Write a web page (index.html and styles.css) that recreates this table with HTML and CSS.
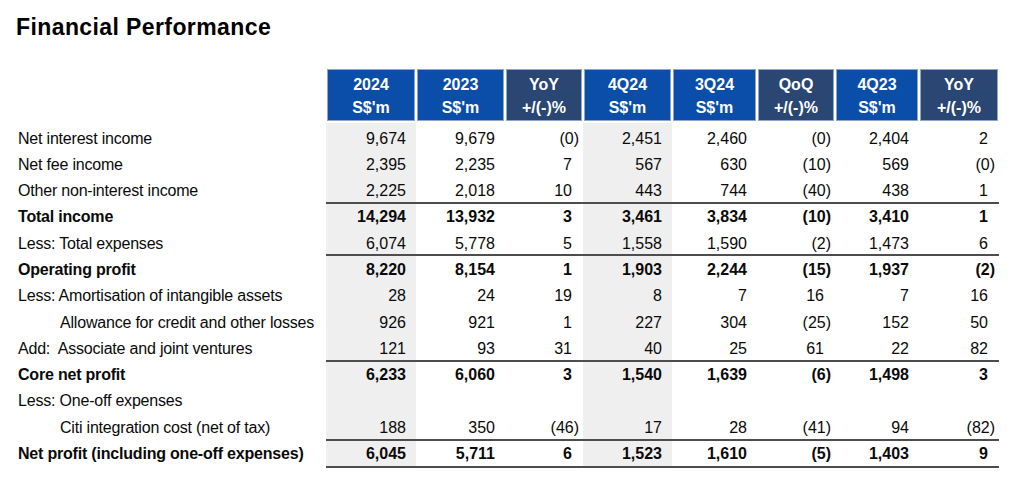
FILE: index.html
```html
<!DOCTYPE html>
<html lang="en">
<head>
<meta charset="utf-8">
<title>Financial Performance</title>
<link rel="stylesheet" href="styles.css">
</head>
<body>
<h1 class="title">Financial Performance</h1>
<table class="fin">
  <colgroup>
    <col class="c-label">
    <col class="c-w90 shade">
    <col class="c-w89">
    <col class="c-w78">
    <col class="c-w89 shade">
    <col class="c-w85">
    <col class="c-w78">
    <col class="c-w84">
    <col class="c-w80">
  </colgroup>
  <thead>
    <tr>
      <th class="blank"></th>
      <th class="hb">2024<br>S$'m</th>
      <th class="hb">2023<br>S$'m</th>
      <th class="hn">YoY<br>+/(-)%</th>
      <th class="hb">4Q24<br>S$'m</th>
      <th class="hb">3Q24<br>S$'m</th>
      <th class="hn">QoQ<br>+/(-)%</th>
      <th class="hb">4Q23<br>S$'m</th>
      <th class="hn">YoY<br>+/(-)%</th>
    </tr>
  </thead>
  <tbody>
    <tr>
      <td class="lbl">Net interest income</td>
      <td class="amt">9,674</td><td class="amt">9,679</td><td class="pct neg">(0)</td>
      <td class="amt">2,451</td><td class="amt">2,460</td><td class="pct neg">(0)</td>
      <td class="amt">2,404</td><td class="pct">2</td>
    </tr>
    <tr>
      <td class="lbl">Net fee income</td>
      <td class="amt">2,395</td><td class="amt">2,235</td><td class="pct">7</td>
      <td class="amt">567</td><td class="amt">630</td><td class="pct neg">(10)</td>
      <td class="amt">569</td><td class="pct neg">(0)</td>
    </tr>
    <tr>
      <td class="lbl">Other non-interest income</td>
      <td class="amt">2,225</td><td class="amt">2,018</td><td class="pct">10</td>
      <td class="amt">443</td><td class="amt">744</td><td class="pct neg">(40)</td>
      <td class="amt">438</td><td class="pct">1</td>
    </tr>
    <tr class="total">
      <td class="lbl">Total income</td>
      <td class="amt">14,294</td><td class="amt">13,932</td><td class="pct">3</td>
      <td class="amt">3,461</td><td class="amt">3,834</td><td class="pct neg">(10)</td>
      <td class="amt">3,410</td><td class="pct">1</td>
    </tr>
    <tr>
      <td class="lbl">Less: Total expenses</td>
      <td class="amt">6,074</td><td class="amt">5,778</td><td class="pct">5</td>
      <td class="amt">1,558</td><td class="amt">1,590</td><td class="pct neg">(2)</td>
      <td class="amt">1,473</td><td class="pct">6</td>
    </tr>
    <tr class="total">
      <td class="lbl">Operating profit</td>
      <td class="amt">8,220</td><td class="amt">8,154</td><td class="pct">1</td>
      <td class="amt">1,903</td><td class="amt">2,244</td><td class="pct neg">(15)</td>
      <td class="amt">1,937</td><td class="pct neg">(2)</td>
    </tr>
    <tr>
      <td class="lbl">Less: Amortisation of intangible assets</td>
      <td class="amt">28</td><td class="amt">24</td><td class="pct">19</td>
      <td class="amt">8</td><td class="amt">7</td><td class="pct">16</td>
      <td class="amt">7</td><td class="pct">16</td>
    </tr>
    <tr>
      <td class="lbl indent">Allowance for credit and other losses</td>
      <td class="amt">926</td><td class="amt">921</td><td class="pct">1</td>
      <td class="amt">227</td><td class="amt">304</td><td class="pct neg">(25)</td>
      <td class="amt">152</td><td class="pct">50</td>
    </tr>
    <tr>
      <td class="lbl">Add:&nbsp; Associate and joint ventures</td>
      <td class="amt">121</td><td class="amt">93</td><td class="pct">31</td>
      <td class="amt">40</td><td class="amt">25</td><td class="pct">61</td>
      <td class="amt">22</td><td class="pct">82</td>
    </tr>
    <tr class="total">
      <td class="lbl">Core net profit</td>
      <td class="amt">6,233</td><td class="amt">6,060</td><td class="pct">3</td>
      <td class="amt">1,540</td><td class="amt">1,639</td><td class="pct neg">(6)</td>
      <td class="amt">1,498</td><td class="pct">3</td>
    </tr>
    <tr>
      <td class="lbl">Less: One-off expenses</td>
      <td class="amt"></td><td class="amt"></td><td class="pct"></td>
      <td class="amt"></td><td class="amt"></td><td class="pct"></td>
      <td class="amt"></td><td class="pct"></td>
    </tr>
    <tr>
      <td class="lbl indent">Citi integration cost (net of tax)</td>
      <td class="amt">188</td><td class="amt">350</td><td class="pct neg">(46)</td>
      <td class="amt">17</td><td class="amt">28</td><td class="pct neg">(41)</td>
      <td class="amt">94</td><td class="pct neg">(82)</td>
    </tr>
    <tr class="total last">
      <td class="lbl">Net profit (including one-off expenses)</td>
      <td class="amt">6,045</td><td class="amt">5,711</td><td class="pct">6</td>
      <td class="amt">1,523</td><td class="amt">1,610</td><td class="pct neg">(5)</td>
      <td class="amt">1,403</td><td class="pct">9</td>
    </tr>
  </tbody>
</table>
</body>
</html>
```

FILE: styles.css
```css
html, body {
  margin: 0;
  padding: 0;
  background: #ffffff;
}

body {
  font-family: "Liberation Sans", Arial, sans-serif;
  color: #000000;
}

.title {
  margin: 13px 0 0 16px;
  font-size: 23px;
  line-height: 28px;
  font-weight: 700;
  letter-spacing: 0.4px;
  color: #000000;
}

.fin {
  margin: 27px 0 0 18px;
  border-collapse: separate;
  border-spacing: 0;
  table-layout: fixed;
  font-size: 16px;
  width: 981px;
}

.c-label { width: 308px; }
.c-w90 { width: 90px; }
.c-w89 { width: 89px; }
.c-w85 { width: 85px; }
.c-w84 { width: 84px; }
.c-w80 { width: 80px; }
.c-w78 { width: 78px; }

.shade { background: #efefef; }

.fin th {
  height: 55px;
  box-sizing: border-box;
  padding: 4px 0 0;
  border: 1px solid #ffffff;
  border-bottom-width: 2px;
  box-shadow: inset 0 0 0 1px #8ea6cc;
  color: #ffffff;
  font-weight: 700;
  line-height: 23px;
  text-align: center;
  vertical-align: top;
}

.fin th.blank {
  background: #ffffff;
  box-shadow: none;
}

.fin th.hb { background: #0b4ea9; }
.fin th.hn { background: #2a4673; }

.fin td {
  padding: 6.5px 0 1.8px;
  line-height: 18px;
  vertical-align: top;
  white-space: nowrap;
  color: #0a0a0a;
}

.fin td.lbl {
  background: #ffffff;
  padding-left: 0;
  letter-spacing: -0.2px;
  text-align: left;
}

.fin td.indent { padding-left: 42px; }

.fin td.amt {
  text-align: right;
  padding-right: 10px;
}

.fin td.pct {
  text-align: right;
  padding-right: 11px;
}

.fin td.pct.neg { padding-right: 4px; }

.fin tr.total td { font-weight: 700; }

.fin tr.total td.amt,
.fin tr.total td.pct {
  border-top: 2px solid #4d4d4d;
  padding-top: 4.5px;
}

.fin tr.total td.lbl {
  padding-top: 6.5px;
  padding-bottom: 1.8px;
}

.fin tr.last td {
  padding-bottom: 3px;
}

.fin tr.last td.amt,
.fin tr.last td.pct {
  border-bottom: 2px solid #4d4d4d;
}
```
